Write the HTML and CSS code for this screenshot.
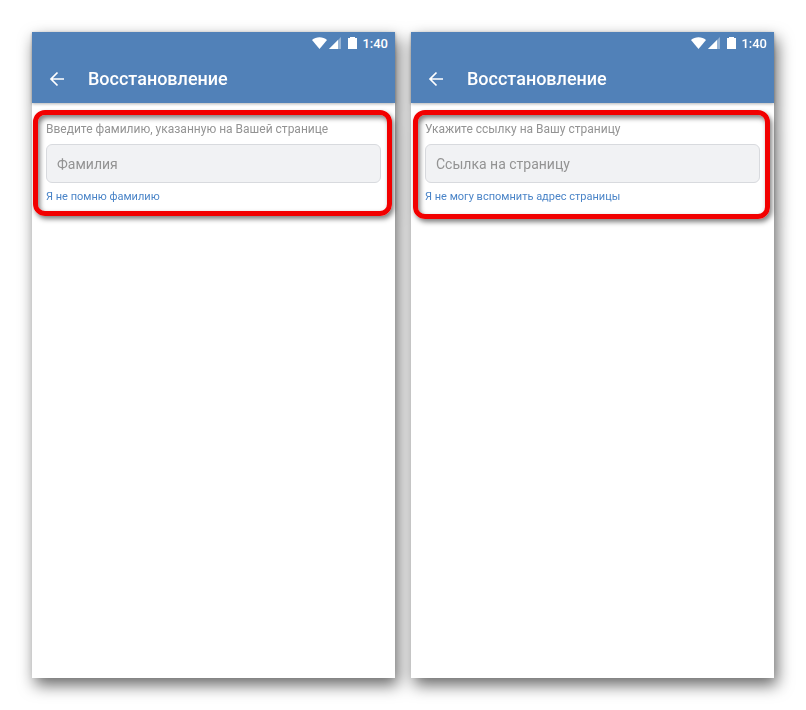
FILE: index.html
```html
<!DOCTYPE html>
<html lang="ru">

<head>
    <meta charset="UTF-8">
    <meta name="viewport" content="width=device-width, initial-scale=1.0">
    <title>Восстановление</title>
    <link rel="stylesheet" href="styles.css">
</head>

<body>
    <main class="screens">
        <section class="phone">
            <header class="header">
                <div class="status">
                    <svg class="signals" width="46" height="14" viewBox="0 0 46 14" fill="#fff" aria-hidden="true">
                        <path d="M0 4C4 .3 11 .3 15 4L7.500 13Z" />
                        <path d="M17 13L29 1V13Z" opacity=".4" />
                        <path d="M17 13L26 4V13Z" />
                        <path d="M36 2H38V1H43V2H45V13H36Z" />
                    </svg>
                    <span>1:40</span>
                </div>
                <div class="toolbar">
                    <button class="back" type="button" aria-label="Назад">
                        <svg width="16" height="16" viewBox="0 0 16 16" fill="none" stroke="#fff" stroke-width="1.700">
                            <path d="M15 8H2M8.500 1.500L2 8L8.500 14.500" />
                        </svg>
                    </button>
                    <h1>Восстановление</h1>
                </div>
            </header>
            <form class="form">
                <label for="surname">Введите фамилию, указанную на Вашей странице</label>
                <input type="text" id="surname" placeholder="Фамилия">
                <a href="#">Я не помню фамилию</a>
                <span class="frame"></span>
            </form>
        </section>

        <section class="phone">
            <header class="header">
                <div class="status">
                    <svg class="signals" width="46" height="14" viewBox="0 0 46 14" fill="#fff" aria-hidden="true">
                        <path d="M0 4C4 .3 11 .3 15 4L7.500 13Z" />
                        <path d="M17 13L29 1V13Z" opacity=".4" />
                        <path d="M17 13L26 4V13Z" />
                        <path d="M36 2H38V1H43V2H45V13H36Z" />
                    </svg>
                    <span>1:40</span>
                </div>
                <div class="toolbar">
                    <button class="back" type="button" aria-label="Назад">
                        <svg width="16" height="16" viewBox="0 0 16 16" fill="none" stroke="#fff" stroke-width="1.700">
                            <path d="M15 8H2M8.500 1.500L2 8L8.500 14.500" />
                        </svg>
                    </button>
                    <h1>Восстановление</h1>
                </div>
            </header>
            <form class="form">
                <label for="link">Укажите ссылку на Вашу страницу</label>
                <input type="text" id="link" placeholder="Ссылка на страницу">
                <a href="#">Я не могу вспомнить адрес страницы</a>
                <span class="frame frame-link"></span>
            </form>
        </section>
    </main>
</body>

</html>
```

FILE: styles.css
```css
* {
    box-sizing: border-box;
}

body {
    margin: 0;
    min-height: 100vh;
    padding: 32px;
    display: flex;
    background-color: #fff;
    font-family: Roboto, sans-serif;
}

/* one shadow for both phones, so it never falls on the neighbour */
.screens {
    flex: 1;
    display: flex;
    gap: 16px;
    filter: drop-shadow(3px 7px 8px rgba(0, 0, 0, 0.6));
}

.phone {
    flex: 1;
    min-width: 0;
    background-color: #fff;
}

.header {
    background-color: #5181b8;
    color: #fff;
    box-shadow: 0 1px 3px rgba(0, 0, 0, 0.3);
}

.status {
    display: flex;
    justify-content: flex-end;
    align-items: center;
    gap: 4px;
    height: 22px;
    padding: 0 7px 0 0;
    font-size: 13px;
    font-weight: 500;
}

.toolbar {
    display: flex;
    align-items: center;
    gap: 23px;
    height: 49px;
    padding: 0 17px;
}

.back {
    display: flex;
    padding: 0;
    border: none;
    background: none;
    cursor: pointer;
}

h1 {
    margin: 0;
    font-size: 18px;
    font-weight: 500;
}

.form {
    position: relative;
    padding: 18px 14px 14px;
}

label {
    display: block;
    font-size: 12px;
    line-height: 16px;
    color: #939393;
}

input {
    display: block;
    width: 100%;
    height: 39px;
    margin: 7px 0;
    padding: 0 10px;
    border: 1px solid #d8dade;
    border-radius: 6px;
    background-color: #f1f2f4;
    font-family: inherit;
    font-size: 14px;
}

input::placeholder {
    color: #939393;
}

a {
    display: block;
    font-size: 11px;
    line-height: 14px;
    color: #4b85c8;
    text-decoration: none;
}

/* red highlight drawn over the form */
.frame {
    position: absolute;
    inset: 7px 3px 2px 1px;
    border: 5px solid #f20000;
    border-radius: 12px;
    box-shadow: 2px 3px 5px rgba(0, 0, 0, 0.5), inset 2px 3px 5px rgba(0, 0, 0, 0.5);
    pointer-events: none;
}

.frame-link {
    inset: 7px 4px -1px 2px;
}
```
